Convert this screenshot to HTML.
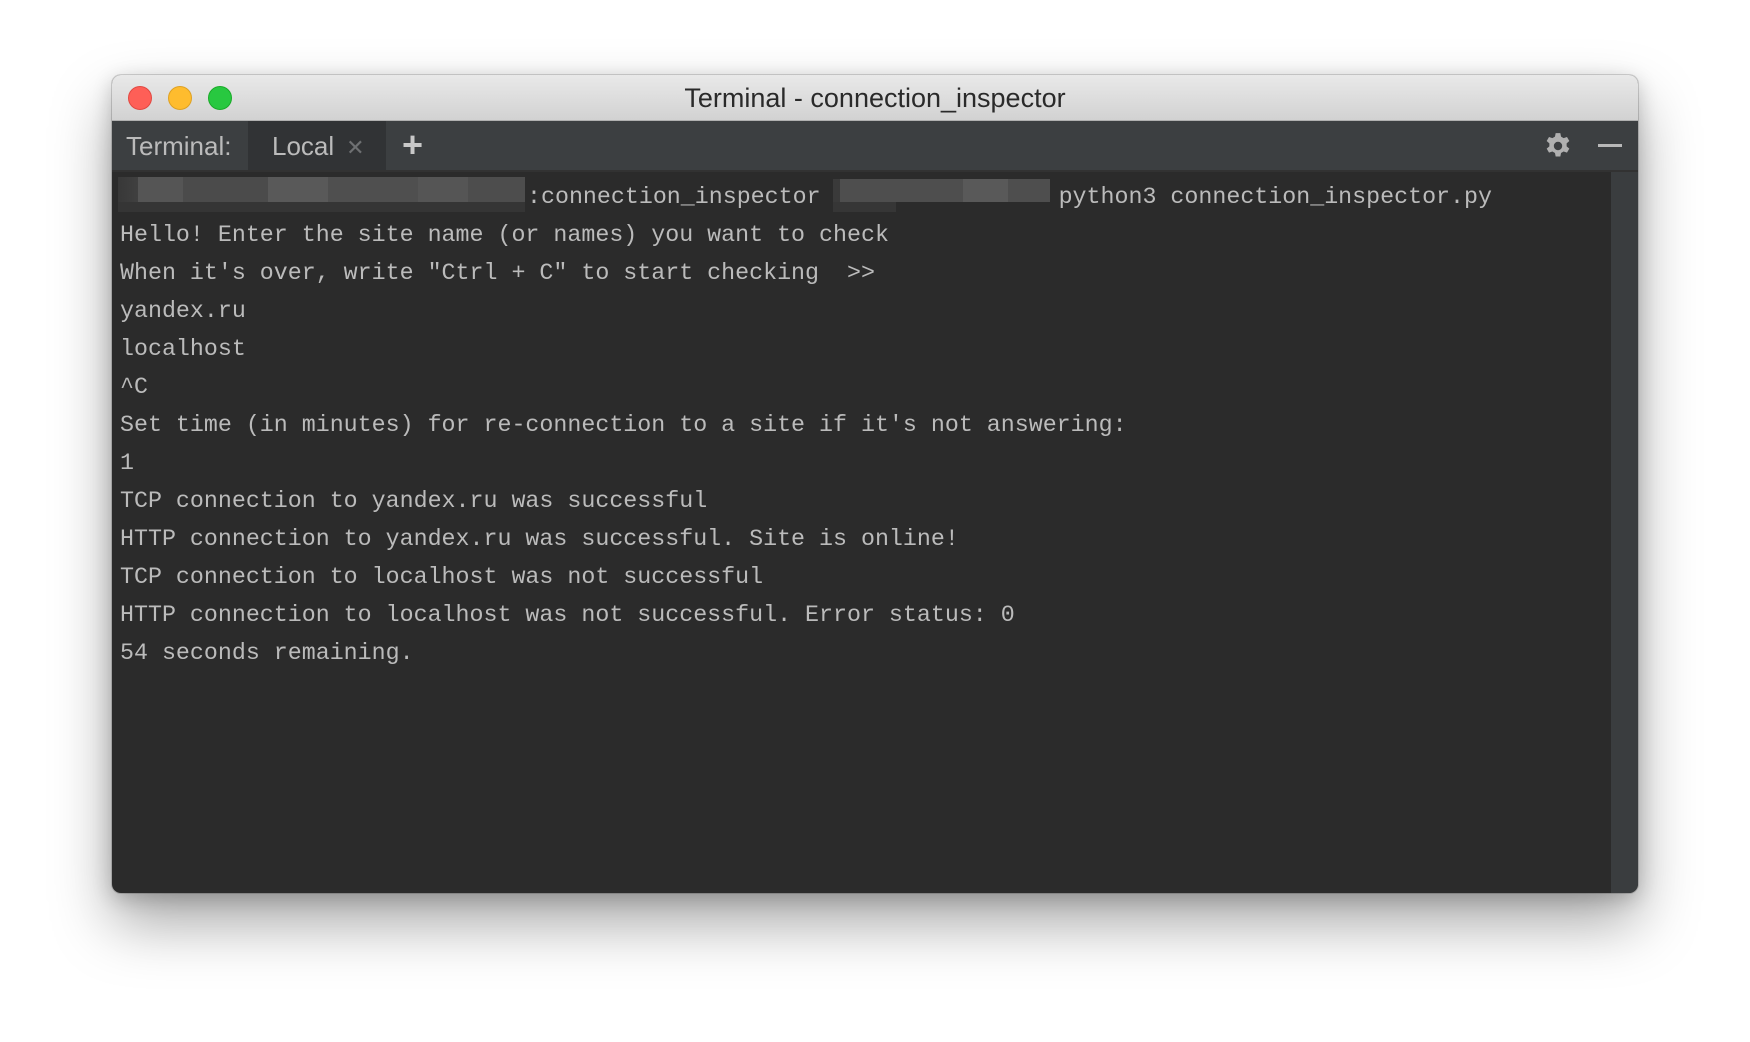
<!DOCTYPE html>
<html><head><meta charset="utf-8"><style>
html,body{margin:0;padding:0;background:#fff;width:1750px;height:1042px;overflow:hidden;position:relative}
.win{position:absolute;left:112px;top:75px;width:1526px;height:818px;border-radius:9px;overflow:hidden;background:#2b2b2b;box-shadow:0 30px 60px rgba(0,0,0,.35),0 0 0 1px rgba(0,0,0,.15),0 5px 20px rgba(0,0,0,.2)}
.title{position:absolute;left:0;top:0;width:100%;height:45px;background:linear-gradient(#e9e9e9,#d2d2d2);border-bottom:1px solid #b0b0b0;font:27px/47px "Liberation Sans",sans-serif;color:#2a2a2a;text-align:center}
.dot{position:absolute;top:11px;width:23px;height:23px;border-radius:50%}
.tabs{position:absolute;left:0;top:46px;width:100%;height:49px;background:#3c3f41;border-bottom:2px solid #323232}
.lbl{position:absolute;top:0;height:49px;font:26px/50px "Liberation Sans",sans-serif;color:#bbb}
.term{position:absolute;left:8px;top:103px;font:23.3px/38px "Liberation Mono",monospace;color:#bbbbbb;white-space:pre}
.sb{position:absolute;right:0;top:97px;width:27px;bottom:0;background:#3a3d3f}
.px{position:absolute;height:25px}
</style></head><body>
<div class="win">
 <div class="title">Terminal - connection_inspector
  <div class="dot" style="left:16px;background:#fe5f57;border:1px solid #e14942;width:22px;height:22px"></div>
  <div class="dot" style="left:56px;background:#febc2e;border:1px solid #dea123;width:22px;height:22px"></div>
  <div class="dot" style="left:96px;background:#28c840;border:1px solid #1aab29;width:22px;height:22px"></div>
 </div>
 <div class="tabs">
  <div class="lbl" style="left:0;width:136px;background:#3c3f41"><span style="margin-left:14px">Terminal:</span></div>
  <div class="lbl" style="left:136px;width:138px;background:#313335"><span style="margin-left:24px">Local</span><span style="margin-left:12px;color:#6e7072;font-size:22px">✕</span></div>
  <div class="lbl" style="left:290px;font-size:36px;line-height:48px;color:#c8c8c8;font-weight:bold">+</div>
  <svg style="position:absolute;left:1432px;top:11px" width="28" height="28" viewBox="0 0 24 24"><path fill="#b0b0b0" d="M10 1h4l.6 3 2.2 1.3 2.9-1 2 3.4-2.3 2v2.6l2.3 2-2 3.4-2.9-1-2.2 1.3-.6 3h-4l-.6-3-2.2-1.3-2.9 1-2-3.4 2.3-2v-2.6l-2.3-2 2-3.4 2.9 1L9.4 4z"/><circle cx="12" cy="12" r="3.6" fill="#3c3f41"/></svg>
  <div style="position:absolute;left:1486px;top:23px;width:24px;height:3px;background:#b8b8b8"></div>
 </div>
 <div class="sb"></div>
 <div class="px" style="left:6px;top:102px;width:407px;background:linear-gradient(90deg,#383838 0,#404040 20px,#555 20px,#555 65px,#4b4b4b 65px,#4b4b4b 150px,#595959 150px,#595959 210px,#4f4f4f 210px,#4f4f4f 300px,#555 300px,#555 350px,#4d4d4d 350px)"></div>
 <div class="px" style="left:6px;top:127px;width:407px;height:10px;background:#353535"></div>
 <div class="px" style="left:721px;top:104px;width:217px;height:23px;background:linear-gradient(90deg,#3a3a3a 0,#3a3a3a 7px,#4e4e4e 7px,#4e4e4e 130px,#595959 130px,#595959 175px,#4e4e4e 175px)"></div>
 <div class="px" style="left:721px;top:127px;width:63px;height:10px;background:#363636"></div>
 <div class="term"><span style="display:inline-block;width:407px"></span>:connection_inspector <span style="display:inline-block;width:224px"></span>python3 connection_inspector.py
Hello! Enter the site name (or names) you want to check
When it's over, write "Ctrl + C" to start checking  >>
yandex.ru
localhost
^C
Set time (in minutes) for re-connection to a site if it's not answering:
1
TCP connection to yandex.ru was successful
HTTP connection to yandex.ru was successful. Site is online!
TCP connection to localhost was not successful
HTTP connection to localhost was not successful. Error status: 0
54 seconds remaining.</div>
</div>
</body></html>
